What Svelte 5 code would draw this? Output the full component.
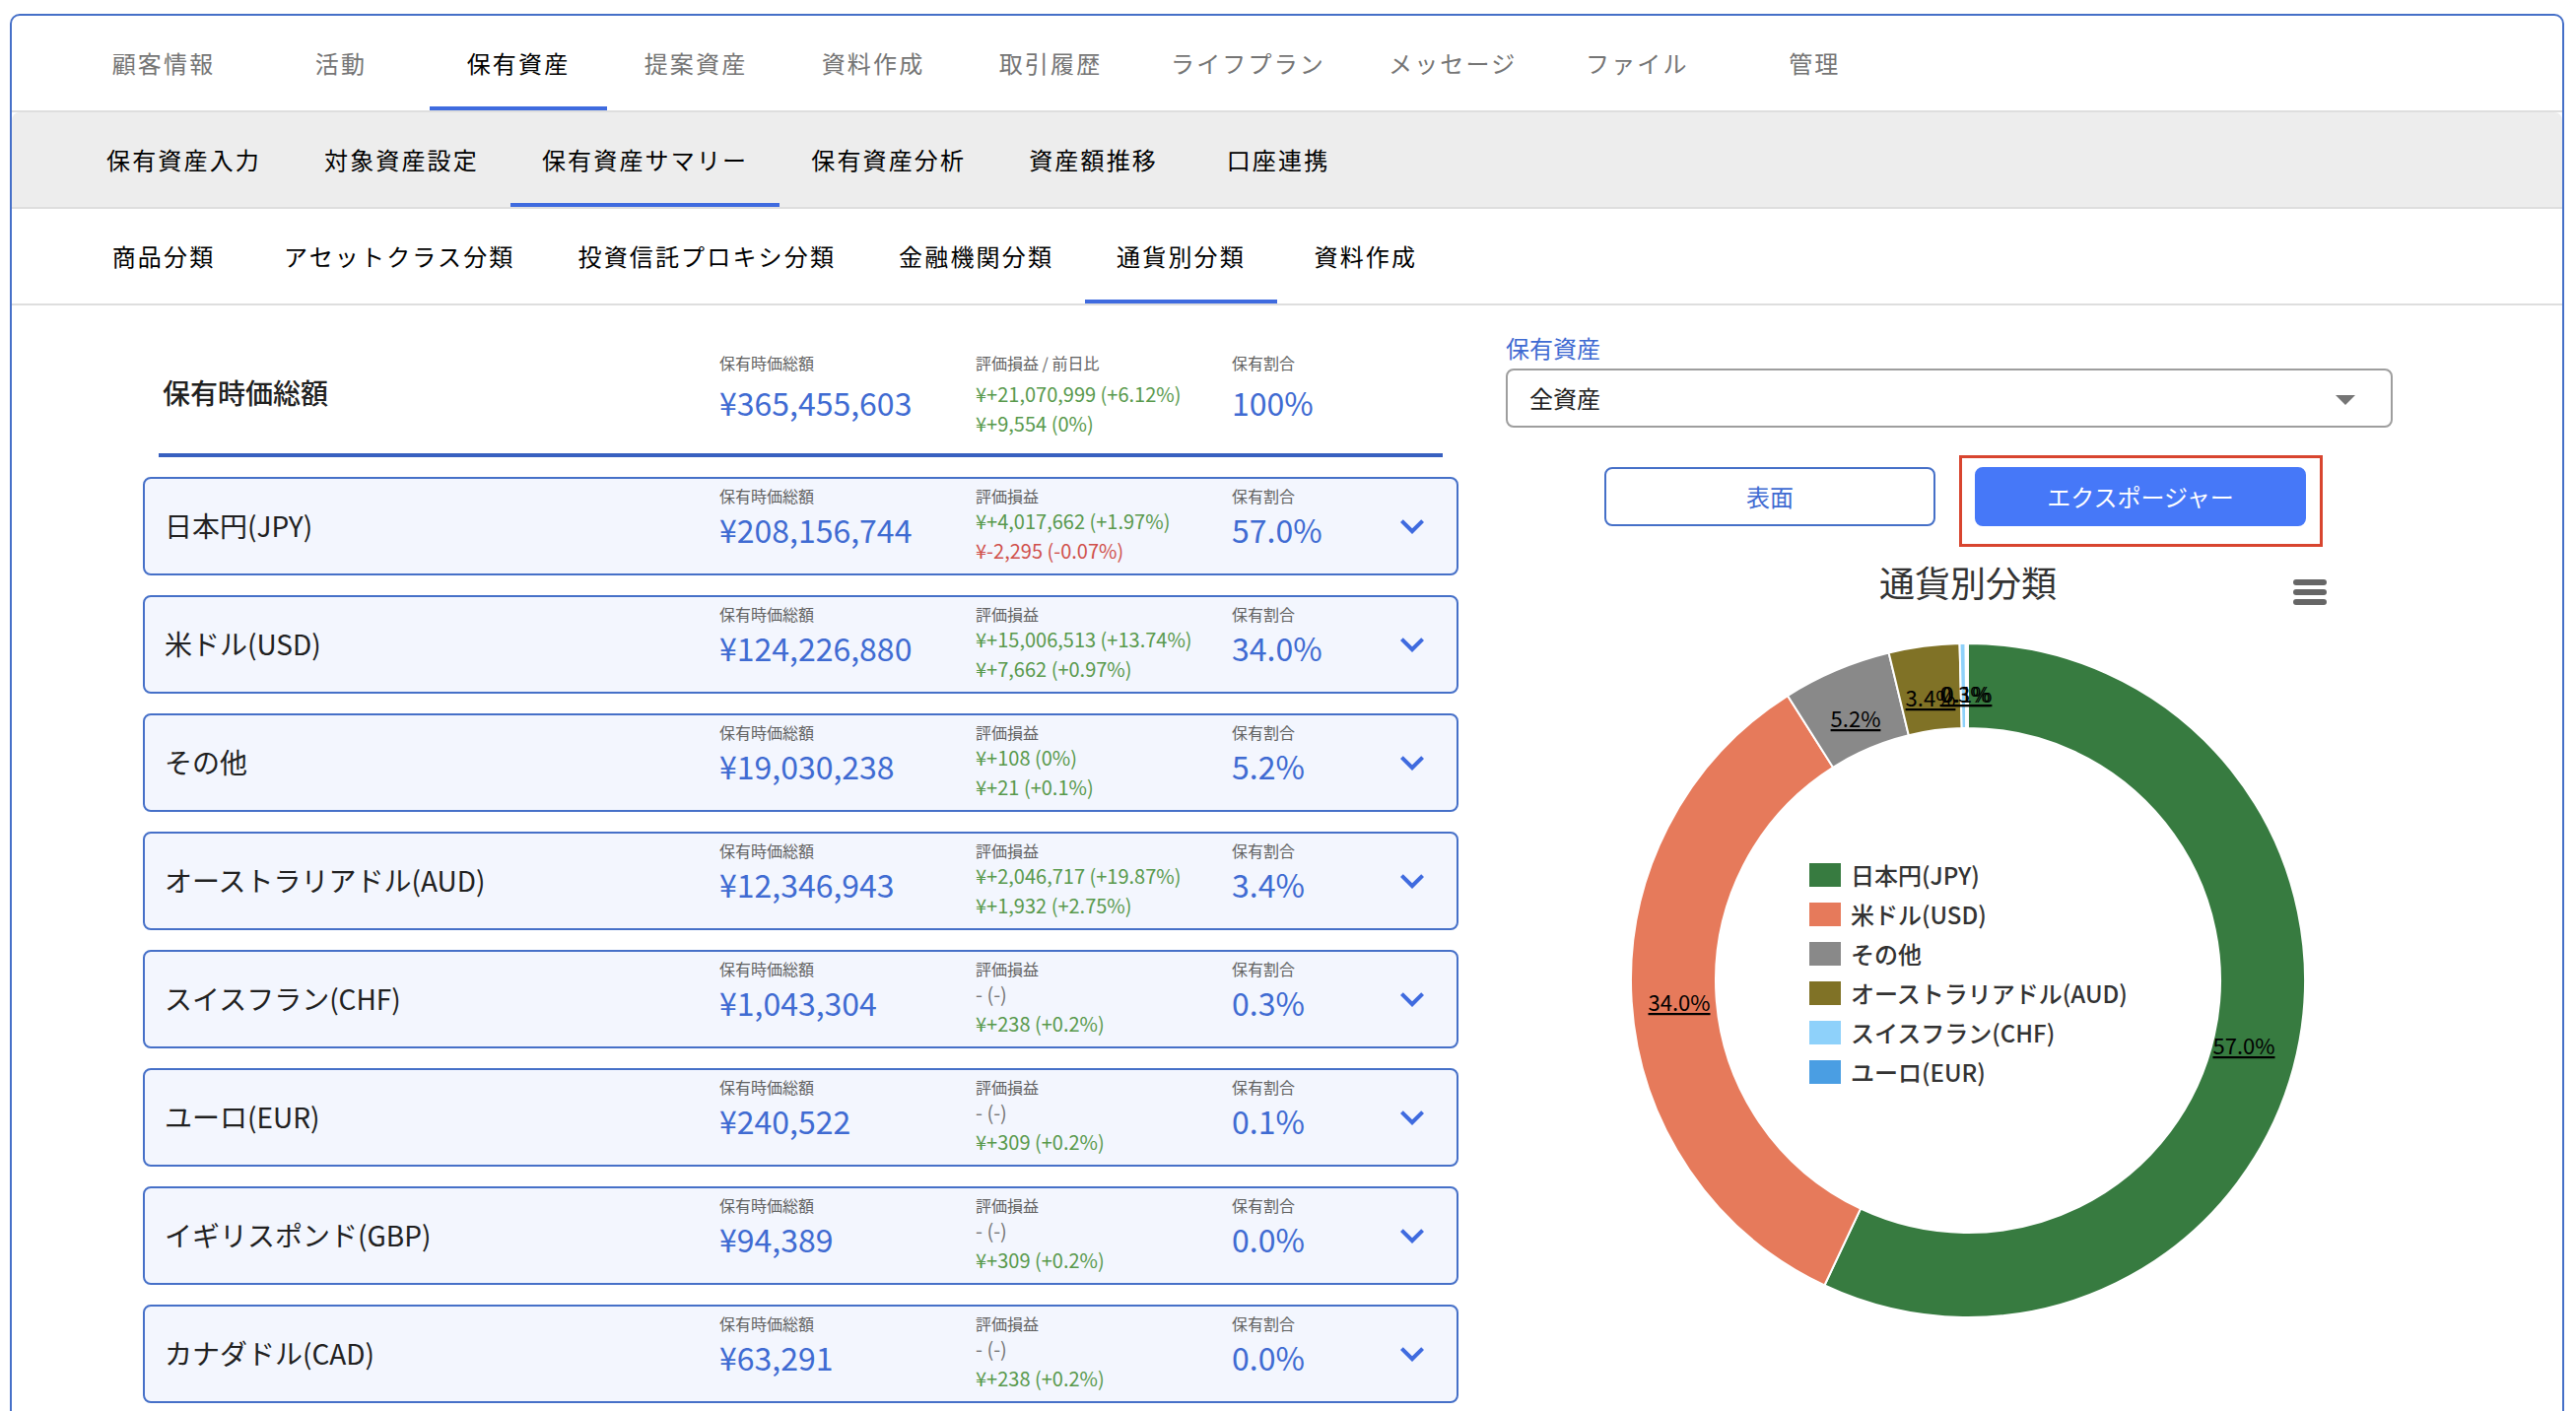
<script>
  const mainTabs = ['顧客情報', '活動', '保有資産', '提案資産', '資料作成', '取引履歴', 'ライフプラン', 'メッセージ', 'ファイル', '管理'];
  const subTabs = ['保有資産入力', '対象資産設定', '保有資産サマリー', '保有資産分析', '資産額推移', '口座連携'];
  const classTabs = ['商品分類', 'アセットクラス分類', '投資信託プロキシ分類', '金融機関分類', '通貨別分類', '資料作成'];

  const total = {
    name: '保有時価総額',
    amount: '¥365,455,603',
    gain: '¥+21,070,999 (+6.12%)',
    change: '¥+9,554 (0%)',
    share: '100%'
  };

  const holdings = [
    { name: '日本円(JPY)', value: 208156744, gain: '¥+4,017,662 (+1.97%)', change: '¥-2,295 (-0.07%)', share: '57.0%' },
    { name: '米ドル(USD)', value: 124226880, gain: '¥+15,006,513 (+13.74%)', change: '¥+7,662 (+0.97%)', share: '34.0%' },
    { name: 'その他', value: 19030238, gain: '¥+108 (0%)', change: '¥+21 (+0.1%)', share: '5.2%' },
    { name: 'オーストラリアドル(AUD)', value: 12346943, gain: '¥+2,046,717 (+19.87%)', change: '¥+1,932 (+2.75%)', share: '3.4%' },
    { name: 'スイスフラン(CHF)', value: 1043304, gain: '- (-)', change: '¥+238 (+0.2%)', share: '0.3%' },
    { name: 'ユーロ(EUR)', value: 240522, gain: '- (-)', change: '¥+309 (+0.2%)', share: '0.1%' },
    { name: 'イギリスポンド(GBP)', value: 94389, gain: '- (-)', change: '¥+309 (+0.2%)', share: '0.0%' },
    { name: 'カナダドル(CAD)', value: 63291, gain: '- (-)', change: '¥+238 (+0.2%)', share: '0.0%' }
  ];

  const colors = ['#377b40', '#e67a5b', '#898989', '#807226', '#8ed1fa', '#4a9ee3'];
  // Label anchors, relative to the centre of the ring.
  const labelSpots = [[280, 75], [-293, 31], [-114, -257], [-38, -278], [-3, -282], [-1, -282]];

  const OUTER = 342;
  const INNER = 256;

  function point(radius, turn) {
    const a = turn * 2 * Math.PI;
    return `${(radius * Math.sin(a)).toFixed(2)} ${(-radius * Math.cos(a)).toFixed(2)}`;
  }

  function ring(from, to) {
    const large = to - from > 0.5 ? 1 : 0;
    return `M${point(OUTER, from)}A${OUTER} ${OUTER} 0 ${large} 1 ${point(OUTER, to)}` +
      `L${point(INNER, to)}A${INNER} ${INNER} 0 ${large} 0 ${point(INNER, from)}Z`;
  }

  const charted = holdings.slice(0, 6);
  const sum = holdings.reduce((s, h) => s + h.value, 0);
  let run = 0;
  const slices = charted.map((h, i) => {
    const from = run / sum;
    run += h.value;
    return { name: h.name, share: h.share, color: colors[i], spot: labelSpots[i], d: ring(from, run / sum) };
  });

  const tone = (text) => (text.startsWith('¥+') ? 'up' : text.startsWith('¥-') ? 'down' : 'flat');
  const yen = (n) => '¥' + n.toLocaleString('en-US');
</script>

{#snippet tabs(items, active, kind, label)}
  <nav class="tabs {kind}" aria-label={label}>
    {#each items as item, i}
      <button type="button" class="tab" class:active={i === active}>{item}</button>
    {/each}
  </nav>
{/snippet}

{#snippet figures(amount, gain, change, share, gainLabel)}
  <div class="figure">
    <span class="caption">保有時価総額</span>
    <span class="big">{amount}</span>
  </div>
  <div class="figure">
    <span class="caption">{gainLabel}</span>
    <span class="small {tone(gain)}">{gain}</span>
    <span class="small {tone(change)}">{change}</span>
  </div>
  <div class="figure">
    <span class="caption">保有割合</span>
    <span class="big">{share}</span>
  </div>
{/snippet}

<main class="panel">
  {@render tabs(mainTabs, 2, 'main', 'メイン')}
  {@render tabs(subTabs, 2, 'sub', '保有資産')}
  {@render tabs(classTabs, 4, 'class', '分類')}

  <div class="content">
    <section class="list">
      <div class="total">
        <h1>{total.name}</h1>
        {@render figures(total.amount, total.gain, total.change, total.share, '評価損益 / 前日比')}
      </div>
      {#each holdings as h}
        <article class="card">
          <h2>{h.name}</h2>
          {@render figures(yen(h.value), h.gain, h.change, h.share, '評価損益')}
          <button type="button" class="expand" aria-label="{h.name}の詳細">
            <svg viewBox="0 0 24 24" width="48" height="48" aria-hidden="true">
              <path d="M7.41 8.58 12 13.17l4.59-4.59L18 10l-6 6-6-6z" />
            </svg>
          </button>
        </article>
      {/each}
    </section>

    <section class="side">
      <div class="field">
        <label for="asset">保有資産</label>
        <div class="select">
          <select id="asset"><option>全資産</option></select>
          <svg viewBox="0 0 20 10" width="20" height="10" aria-hidden="true"><path d="M0 0h20L10 10z" /></svg>
        </div>
      </div>

      <div class="modes">
        <button type="button" class="mode">表面</button>
        <div class="marked">
          <button type="button" class="mode filled">エクスポージャー</button>
          <span class="marker"></span>
        </div>
      </div>

      <div class="chart">
        <h2>通貨別分類</h2>
        <button type="button" class="menu" aria-label="チャートメニュー">
          <span></span><span></span><span></span>
        </button>
        <div class="donut">
          <svg viewBox="-342 -342 684 684" role="img" aria-label="通貨別分類">
            {#each slices as s}
              <path d={s.d} fill={s.color} />
            {/each}
            {#each slices as s}
              <text x={s.spot[0]} y={s.spot[1]}>{s.share}</text>
            {/each}
          </svg>
          <ul class="legend">
            {#each slices as s}
              <li>
                <svg width="32" height="24" aria-hidden="true"><rect width="32" height="24" fill={s.color} /></svg>
                {s.name}
              </li>
            {/each}
          </ul>
        </div>
      </div>
    </section>
  </div>
</main>

<style>
  :global(body) {
    background: #fff;
    overflow: hidden;
  }

  :global(#app) {
    height: 100vh;
    overflow: hidden;
  }

  .panel {
    box-sizing: border-box;
    margin: 14px 12px 0 10px;
    padding-bottom: 60px;
    border: 2px solid #4670c8;
    border-radius: 10px;
    font-family: "Noto Sans CJK JP", sans-serif;
    font-size: 24px;
    color: #212121;
  }

  button,
  select {
    margin: 0;
    padding: 0;
    border: 0;
    background: none;
    font: inherit;
    color: inherit;
    cursor: pointer;
  }

  h1,
  h2 {
    margin: 0;
    font-weight: 400;
  }

  .tabs {
    display: flex;
    padding-left: 64px;
    border-bottom: 2px solid #dedede;
    color: #000;
  }

  .tab {
    position: relative;
    min-width: 180px;
    height: 96px;
    padding: 0 32px;
    letter-spacing: 0.09em;
    line-height: 36px;
    white-space: nowrap;
  }

  .main .tab {
    color: #757575;
  }

  .main .tab.active {
    color: #000;
  }

  .tab.active::after {
    content: "";
    position: absolute;
    left: 0;
    right: 0;
    bottom: 0;
    height: 4px;
    background: #3f6bdf;
  }

  .sub {
    background: #ededed;
    border-radius: 8px 8px 0 0;
  }

  .content {
    display: grid;
    grid-template-columns: minmax(0, 1335fr) minmax(0, 938fr);
    gap: 48px;
    padding: 0 134px 0 133px;
  }

  .list {
    display: flex;
    flex-direction: column;
    gap: 20px;
  }

  .total,
  .card {
    display: grid;
    align-items: center;
    box-sizing: border-box;
  }

  .total {
    grid-template-columns: minmax(0, 1fr) 260px 260px 214px;
    height: 154px;
    margin: 0 16px;
    padding: 26px 0 0 4px;
    border-bottom: 4px solid #3860c0;
  }

  .total h1 {
    font-size: 28px;
    font-weight: 500;
    line-height: 40px;
  }

  .card {
    grid-template-columns: minmax(0, 1fr) 260px 260px 138px 90px;
    height: 100px;
    padding: 0 0 0 20px;
    border: 2px solid #4670c8;
    border-radius: 8px;
    background: #f3f6fe;
  }

  .card h2 {
    padding-bottom: 2px;
    font-size: 28px;
    line-height: 40px;
  }

  .figure {
    display: flex;
    flex-direction: column;
    align-self: start;
    white-space: nowrap;
  }

  .card .figure {
    padding-top: 6px;
  }

  .total .figure {
    padding-top: 21px;
  }

  .caption {
    font-size: 16px;
    line-height: 22px;
    color: #616161;
  }

  .total .caption {
    padding-bottom: 6px;
  }

  .big {
    font-size: 32px;
    line-height: 46px;
    color: #3f6bd2;
  }

  .small {
    font-size: 20px;
    line-height: 30px;
    color: #757575;
  }

  .small.up {
    color: #58994c;
  }

  .small.down {
    color: #d0504b;
  }

  .expand {
    display: flex;
    justify-self: center;
    fill: #3f6bdf;
  }

  .side {
    display: flex;
    flex-direction: column;
    padding-top: 25px;
  }

  .field {
    margin-right: 38px;
    color: #3f6bd2;
  }

  .field label {
    display: block;
    line-height: 36px;
  }

  .select {
    display: flex;
    align-items: center;
    margin-top: 3px;
    color: #212121;
  }

  .select select {
    box-sizing: border-box;
    flex: 1;
    height: 60px;
    padding: 0 22px 2px;
    border: 2px solid #9e9e9e;
    border-radius: 8px;
    appearance: none;
  }

  .select svg {
    margin: 4px 38px 0 -58px;
    fill: #757575;
    pointer-events: none;
  }

  .modes {
    display: flex;
    gap: 40px;
    justify-content: center;
    margin: 40px 26px 0 0;
  }

  .mode {
    box-sizing: border-box;
    width: 336px;
    height: 60px;
    padding-bottom: 2px;
    border: 2px solid #4670c8;
    border-radius: 8px;
    color: #3f6bd2;
  }

  .mode.filled {
    border-color: #4678f8;
    background: #4678f8;
    color: #fff;
  }

  .marked {
    position: relative;
  }

  .marker {
    position: absolute;
    inset: -12px -17px -21px -16px;
    border: 3px solid #d8452f;
    pointer-events: none;
  }

  .chart {
    position: relative;
    padding-top: 29px;
    color: #333;
  }

  .chart h2 {
    font-size: 36px;
    line-height: 54px;
    text-align: center;
  }

  .menu {
    position: absolute;
    top: 54px;
    right: 105px;
    display: flex;
    flex-direction: column;
    gap: 4px;
    width: 34px;
  }

  .menu span {
    height: 6px;
    border-radius: 3px;
    background: #666;
  }

  .donut {
    position: relative;
    display: grid;
    width: 684px;
    max-width: 100%;
    margin: 36px auto 0;
  }

  .donut > svg {
    display: block;
    width: 100%;
  }

  .donut path {
    stroke: #fff;
    stroke-width: 2;
  }

  .donut text {
    font-size: 22px;
    fill: #000;
    text-anchor: middle;
    text-decoration: underline;
  }

  .legend {
    position: absolute;
    top: 215px;
    left: 181px;
    margin: 0;
    padding: 0;
    list-style: none;
    font-weight: 500;
  }

  .legend li {
    display: flex;
    align-items: center;
    gap: 10px;
    line-height: 40px;
    white-space: nowrap;
  }
</style>
